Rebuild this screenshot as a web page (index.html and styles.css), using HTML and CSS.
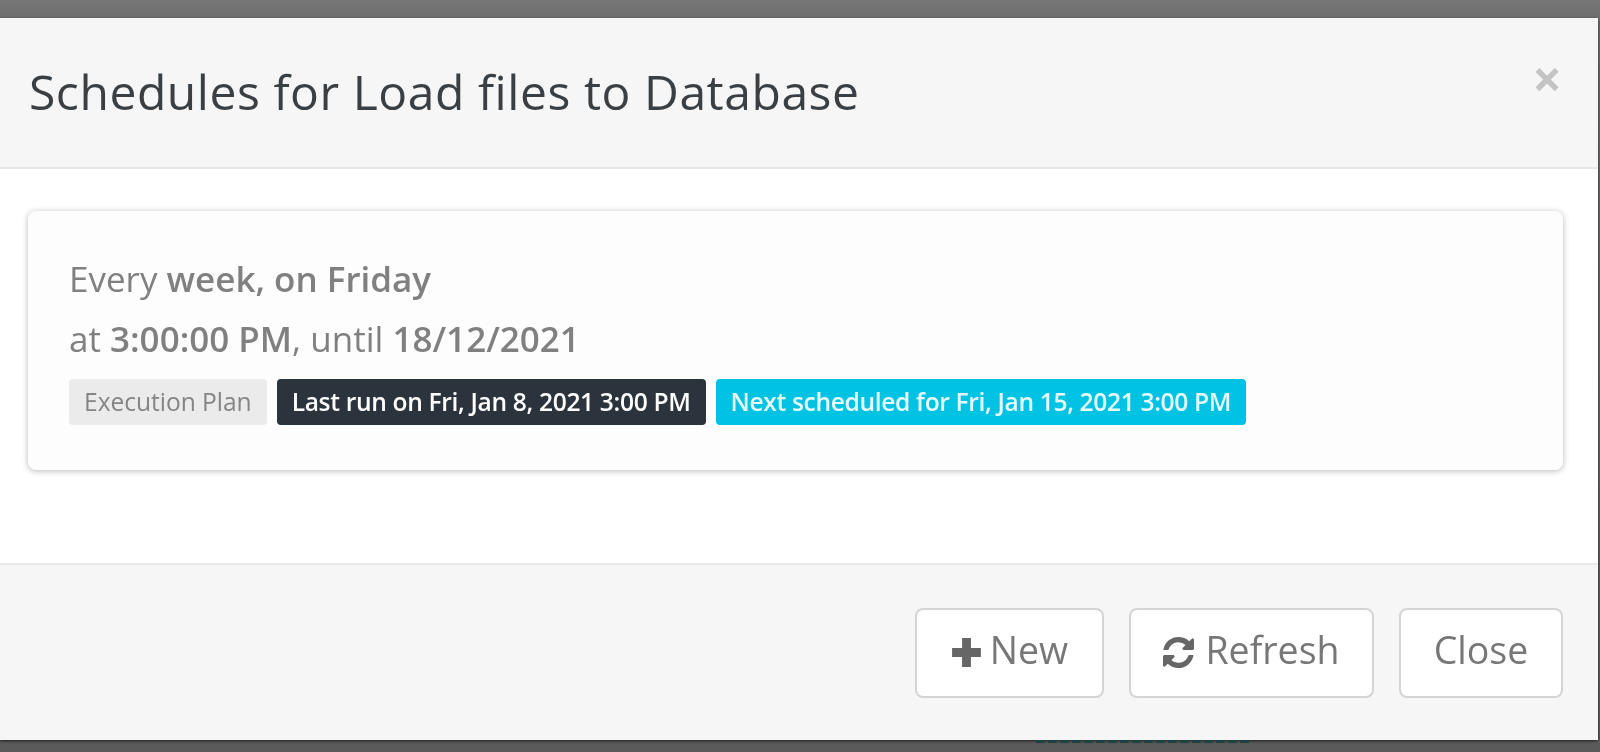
FILE: index.html
```html
<!DOCTYPE html>
<html lang="en">
<head>
<meta charset="utf-8">
<title>Schedules</title>
<link rel="stylesheet" href="styles.css">
</head>
<body>
<div class="backdrop">
  <div class="modal">
    <header class="modal-header">
      <h4 class="modal-title">Schedules for Load files to Database</h4>
      <span class="close-x">×</span>
    </header>
    <section class="modal-body">
      <div class="card">
        <p class="line">Every <b>week, on Friday</b></p>
        <p class="line">at <b>3:00:00 PM</b>, until <b>18/12/2021</b></p>
        <div class="badges">
          <span class="badge badge-plan">Execution Plan</span>
          <span class="badge badge-dark">Last run on Fri, Jan 8, 2021 3:00 PM</span>
          <span class="badge badge-info">Next scheduled for Fri, Jan 15, 2021 3:00 PM</span>
        </div>
      </div>
    </section>
    <footer class="modal-footer">
      <button class="btn btn-new">
        <svg class="icon" viewBox="1 1 14 14" aria-hidden="true"><path d="M6 1.500h4v4.500h4.500v4H10v4.500H6V10H1.500V6H6z"/></svg>
        New
      </button>
      <button class="btn btn-refresh">
        <svg class="icon" viewBox="0 0 1536 1536" aria-hidden="true"><path d="M1511 928q0 5-1 7-64 268-268 434.500T764 1536q-146 0-282.500-55T238 1324l-129 129q-19 19-45 19t-45-19-19-45V960q0-26 19-45t45-19h448q26 0 45 19t19 45-19 45L420 1142q71 66 161 102t187 36q134 0 250-65t186-179q11-17 53-117 8-23 30-23h192q13 0 22.500 9.500t9.500 22.500zM1536 128v448q0 26-19 45t-45 19h-448q-26 0-45-19t-19-45 19-45l138-138q-148-137-349-137-134 0-250 65T332 500q-11 17-53 117-8 23-30 23H50q-13 0-22.500-9.500T18 608v-7q65-268 270-434.500T768 0q146 0 284 55.500T1297 212l130-129q19-19 45-19t45 19 19 45z"/></svg>
        Refresh
      </button>
      <button class="btn btn-close">Close</button>
    </footer>
  </div>
  <div class="behind"><span class="behind-strip"></span></div>
</div>
</body>
</html>
```
FILE: styles.css
```css
* { box-sizing: border-box; }
html, body { margin: 0; height: 752px; overflow: hidden; }
body { font-family: "Open Sans", "Noto Sans", sans-serif; color: #7b7b7b; }

.backdrop {
  height: 752px;
  padding-top: 18px;
  background: linear-gradient(#777 0, #6e6e6e 16px, #5a5a5a 100%);
  overflow: hidden;
}

.modal {
  width: 1598px;
  height: 722px;
  background: #fff;
  display: flex;
  flex-direction: column;
  border-radius: 0 3px 3px 0;
  box-shadow: 0 1px 3px rgba(0, 0, 0, .7);
  filter: blur(.6px);
}

.modal-header {
  height: 151px;
  background: #f6f6f6;
  border-bottom: 2px solid #e8e8e8;
  display: flex;
  justify-content: space-between;
  padding: 46px 36px 0 29px;
}
.modal-title {
  margin: 0;
  font-size: 48px;
  letter-spacing: .55px;
  font-weight: 400;
  line-height: 56px;
  color: #3a3f44;
  white-space: nowrap;
}
.close-x {
  font-family: "Open Sans", sans-serif;
  font-size: 52px;
  font-weight: 700;
  line-height: 40px;
  color: #c4c4c4;
  margin-top: -6px;
}

.modal-body {
  height: 394px;
  padding: 42px 35px 0 28px;
}
.card {
  height: 259px;
  background: #fdfdfd;
  border-radius: 8px;
  box-shadow: 0 1px 6px rgba(0, 0, 0, .28);
  padding: 38px 41px 0;
}
.line {
  margin: 0;
  font-size: 35px;
  line-height: 60px;
  color: #808080;
  white-space: nowrap;
}
.line b { font-weight: 600; }

.badges {
  display: flex;
  gap: 10px;
  margin-top: 10px;
}
.badge {
  height: 46px;
  line-height: 46px;
  padding: 0 15px;
  border-radius: 4px;
  font-size: 24.6px;
  white-space: nowrap;
}
.badge-plan { background: #ebebeb; color: #858585; letter-spacing: -.04px; }
.badge-dark { background: #2b333d; color: #fff; font-weight: 600; letter-spacing: -.34px; }
.badge-info { background: #00c3e3; color: #e6fbff; font-weight: 600; letter-spacing: -.35px; }

.modal-footer {
  flex: 1;
  background: #f6f6f6;
  border-top: 2px solid #e8e8e8;
  display: flex;
  justify-content: flex-end;
  gap: 25px;
  padding: 43px 35px 0 0;
}
.btn {
  height: 90px;
  background: #fff;
  border: 2px solid #d4d4d4;
  border-radius: 8px;
  font-family: inherit;
  font-size: 37.5px;
  color: #777;
  display: flex;
  align-items: center;
  justify-content: center;
  gap: 8px;
  padding: 0 0 7px;
}
.btn-new { width: 189px; }
.btn-refresh { width: 245px; gap: 11px; }
.btn-close { width: 164px; }
.icon { width: 31px; height: 31px; fill: #666; margin-top: 5px; }

.behind {
  padding-left: 1036px;
  height: 12px;
}
.behind-strip {
  display: block;
  width: 214px;
  height: 3px;
  background: repeating-linear-gradient(90deg, #16403f 0 9px, transparent 9px 12px);
  opacity: .8;
}
```
